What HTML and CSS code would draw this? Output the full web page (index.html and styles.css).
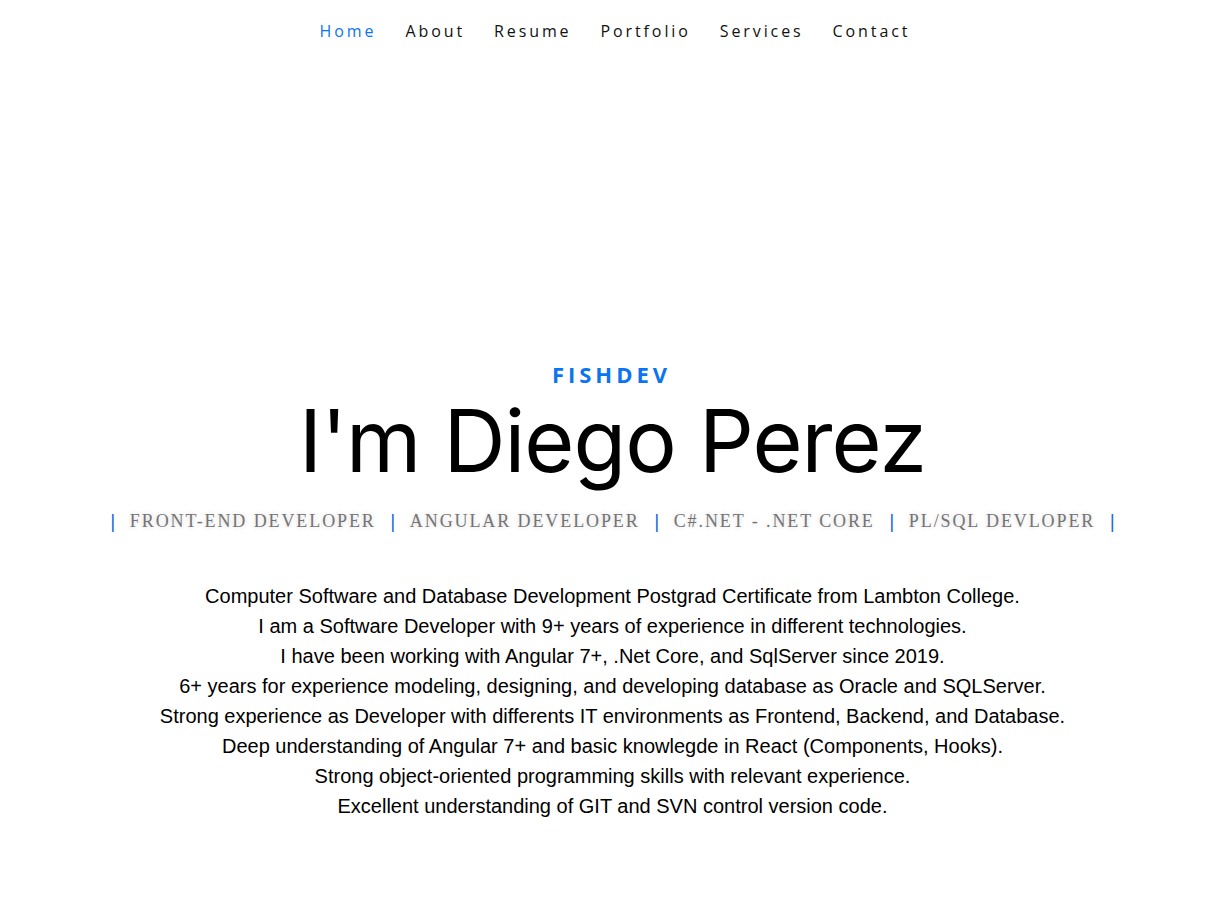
FILE: index.html
```html
<!DOCTYPE html>
<html lang="en">
<head>
<meta charset="utf-8">
<title>Diego Perez</title>
<link rel="stylesheet" href="styles.css">
</head>
<body>
<header class="topbar">
  <nav class="nav">
    <a class="nav-link active" href="#">Home</a>
    <a class="nav-link" href="#">About</a>
    <a class="nav-link" href="#">Resume</a>
    <a class="nav-link" href="#">Portfolio</a>
    <a class="nav-link" href="#">Services</a>
    <a class="nav-link" href="#">Contact</a>
  </nav>
</header>
<main class="hero">
  <div class="brand">FISHDEV</div>
  <h1 class="title">I'm Diego Perez</h1>
  <div class="roles">
    <span class="bar">|</span><span class="role">Front-End Developer</span>
    <span class="bar">|</span><span class="role">Angular Developer</span>
    <span class="bar">|</span><span class="role">C#.NET - .NET Core</span>
    <span class="bar">|</span><span class="role">PL/SQL Devloper</span>
    <span class="bar">|</span>
  </div>
  <div class="about">
    <p>Computer Software and Database Development Postgrad Certificate from Lambton College.</p>
    <p>I am a Software Developer with 9+ years of experience in different technologies.</p>
    <p>I have been working with Angular 7+, .Net Core, and SqlServer since 2019.</p>
    <p>6+ years for experience modeling, designing, and developing database as Oracle and SQLServer.</p>
    <p>Strong experience as Developer with differents IT environments as Frontend, Backend, and Database.</p>
    <p>Deep understanding of Angular 7+ and basic knowlegde in React (Components, Hooks).</p>
    <p>Strong object-oriented programming skills with relevant experience.</p>
    <p>Excellent understanding of GIT and SVN control version code.</p>
  </div>
</main>
</body>
</html>
```
FILE: styles.css
```css
html, body {
  margin: 0;
  padding: 0;
  background: #ffffff;
}
body {
  font-family: "Liberation Sans", Arial, sans-serif;
  color: #000;
}
.topbar {
  height: 62px;
  display: flex;
  align-items: center;
  justify-content: center;
  padding-right: 2px;
}
.nav {
  display: flex;
  gap: 29px;
}
.nav-link {
  font-family: "Open Sans", sans-serif;
  font-size: 16px;
  font-weight: 500;
  letter-spacing: 2.9px;
  color: #111;
  text-decoration: none;
}
.nav-link.active {
  color: #0b74f0;
}
.hero {
  display: flex;
  flex-direction: column;
  align-items: center;
  padding-top: 297px;
  padding-right: 7px;
}
.brand {
  font-family: "Open Sans", sans-serif;
  font-weight: 700;
  font-size: 22px;
  letter-spacing: 4px;
  color: #0b74f0;
  line-height: 30px;
  margin-left: -2px;
}
.title {
  margin: 0;
  font-family: "Inter", sans-serif;
  font-weight: 400;
  font-size: 86px;
  letter-spacing: -1px;
  line-height: 104px;
}
.roles {
  margin-top: 18px;
  display: flex;
  align-items: center;
  gap: 14px;
  font-family: "Liberation Serif", serif;
  font-size: 18px;
  letter-spacing: 1.9px;
  text-transform: uppercase;
  color: #747474;
  text-shadow: 0 0 5px rgba(0,0,0,0.18);
}
.bar {
  color: #1769e0;
  font-family: "DejaVu Sans", sans-serif;
  font-size: 18px;
  letter-spacing: 0;
  text-shadow: none;
}
.about {
  margin-top: 49px;
  text-align: center;
  font-size: 20px;
  line-height: 30px;
}
.about p {
  margin: 0;
}
```
